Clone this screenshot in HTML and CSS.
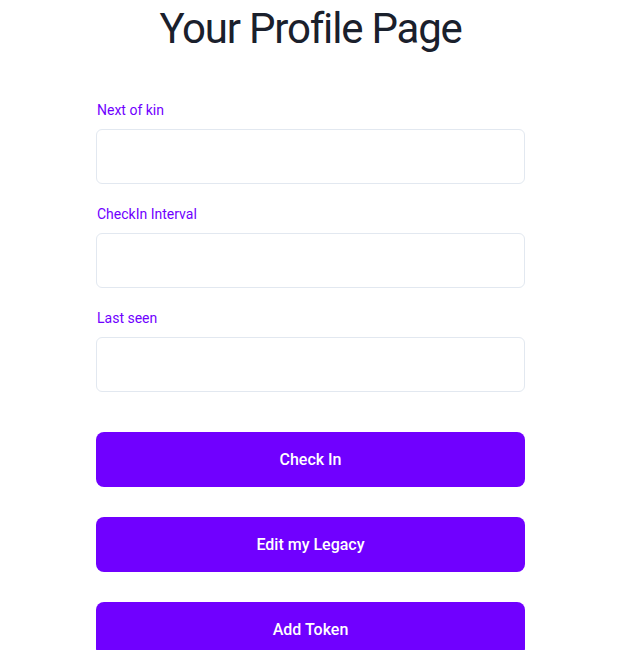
FILE: index.html
```html
<!DOCTYPE html>
<html lang="en">
<head>
<meta charset="utf-8">
<title>Your Profile Page</title>
<link rel="stylesheet" href="styles.css">
</head>
<body>
<main class="page">
  <h1 class="title">Your Profile Page</h1>
  <form class="form">
    <div class="field">
      <label class="label" for="kin">Next of kin</label>
      <input class="input" id="kin" type="text">
    </div>
    <div class="field">
      <label class="label" for="interval">CheckIn Interval</label>
      <input class="input" id="interval" type="text">
    </div>
    <div class="field">
      <label class="label" for="seen">Last seen</label>
      <input class="input" id="seen" type="text">
    </div>
    <div class="actions">
      <button class="btn" type="button">Check In</button>
      <button class="btn" type="button">Edit my Legacy</button>
      <button class="btn" type="button">Add Token</button>
    </div>
  </form>
</main>
</body>
</html>
```
FILE: styles.css
```css
html, body {
  margin: 0;
  padding: 0;
  background: #ffffff;
}
body {
  font-family: Roboto, "Liberation Sans", sans-serif;
  color: #1a202c;
}
.page {
  width: 429px;
  margin-left: 96px;
  padding-top: 4px;
}
.title {
  margin: 0;
  font-size: 42px;
  line-height: 50px;
  font-weight: 400;
  text-align: center;
  color: #1a202c;
  letter-spacing: -1.2px;
}
.form {
  margin-top: 46px;
  display: flex;
  flex-direction: column;
}
.field {
  display: flex;
  flex-direction: column;
  gap: 9px;
  margin-bottom: 20px;
}
.label {
  font-size: 14px;
  line-height: 20px;
  color: #7000ff;
  padding-left: 1px;
}
.input {
  box-sizing: border-box;
  height: 55px;
  width: 100%;
  border: 1px solid #e2e8f0;
  border-radius: 6px;
  background: #fff;
  margin: 0;
}
.actions {
  margin-top: 20px;
  display: flex;
  flex-direction: column;
  gap: 30px;
}
.btn {
  height: 55px;
  width: 100%;
  border: 0;
  border-radius: 8px;
  background: #7000ff;
  color: #fff;
  font-family: Roboto, "Liberation Sans", sans-serif;
  font-size: 16px;
  font-weight: 500;
  cursor: pointer;
}
```
